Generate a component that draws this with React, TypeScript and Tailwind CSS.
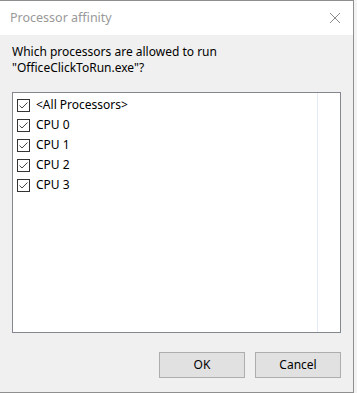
import React from "react";

const font = { fontFamily: '"Noto Sans", "Open Sans", sans-serif' };

function CheckBox() {
  return (
    <svg width="13" height="13" viewBox="0 0 13 13" className="shrink-0">
      <rect x="0.5" y="0.5" width="12" height="12" fill="#fff" stroke="#333" />
      <polyline points="2.5,6.5 5,9 10.5,3.5" fill="none" stroke="#444" strokeWidth="1" />
    </svg>
  );
}

const items = ["<All Processors>", "CPU 0", "CPU 1", "CPU 2", "CPU 3"];

export default function App() {
  return (
    <div className="w-[357px] h-[393px] bg-[#f3f3f3] overflow-hidden" style={font}>
      <div className="w-[354px] h-[393px] border-t border-r border-b border-[#8f8f8f] bg-[#f0f0f0] flex flex-col">
        <div className="h-[34px] bg-white flex items-center justify-between pl-[10px] pr-[12px]">
          <span className="text-[12.5px] text-[#999999]">Processor affinity</span>
          <svg width="12" height="12" viewBox="0 0 12 12">
            <path d="M1 1 L11 11 M11 1 L1 11" stroke="#8c8c8c" strokeWidth="1" />
          </svg>
        </div>
        <div className="flex flex-col px-[12px] pt-[9px]">
          <p className="text-[12px] leading-[16px] text-black">
            Which processors are allowed to run
            <br />
            "OfficeClickToRun.exe"?
          </p>
          <div className="mt-[16px] w-[329px] h-[241px] border border-[#828790] bg-white flex">
            <div className="w-[305px] border-r border-[#e3ebf8] pt-[2px] pl-[4px]">
              {items.map((it) => (
                <div key={it} className="h-[20px] flex items-center gap-[6px]">
                  <CheckBox />
                  <span className="text-[12px] text-black">{it}</span>
                </div>
              ))}
            </div>
          </div>
          <div className="mt-[19px] flex justify-end gap-[10px] w-[329px]">
            <button className="w-[86px] h-[26px] bg-[#e1e1e1] border border-[#adadad] text-[12px] text-black">
              OK
            </button>
            <button className="w-[86px] h-[26px] bg-[#e1e1e1] border border-[#adadad] text-[12px] text-black">
              Cancel
            </button>
          </div>
        </div>
      </div>
    </div>
  );
}
